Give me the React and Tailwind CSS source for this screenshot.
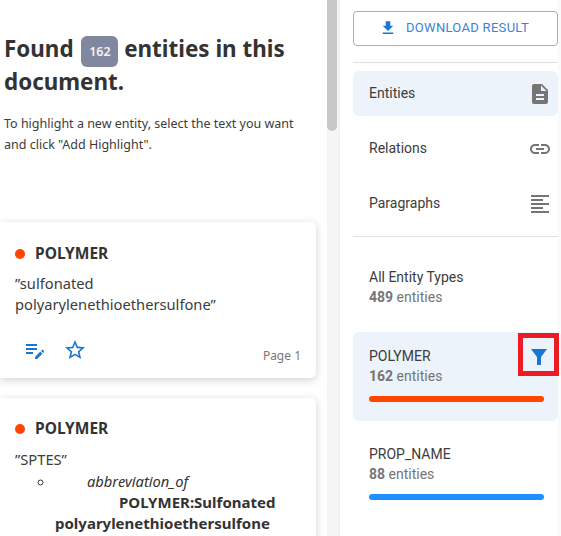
import React from 'react';

const Icon = ({ d, className }) => (
  <svg viewBox="0 0 24 24" fill="currentColor" className={className}>
    <path d={d} />
  </svg>
);

const paths = {
  download: 'M19 9h-4V3H9v6H5l7 7 7-7zM5 18v2h14v-2H5z',
  doc: 'M14 2H6c-1.1 0-1.99.9-1.99 2L4 20c0 1.1.89 2 1.99 2H18c1.1 0 2-.9 2-2V8l-6-6zm2 16H8v-2h8v2zm0-4H8v-2h8v2zm-3-5V3.5L18.5 9H13z',
  link: 'M3.9 12c0-1.71 1.39-3.1 3.1-3.1h4V7H7c-2.76 0-5 2.24-5 5s2.24 5 5 5h4v-1.9H7c-1.71 0-3.1-1.39-3.1-3.1zM8 13h8v-2H8v2zm9-6h-4v1.9h4c1.71 0 3.1 1.39 3.1 3.1s-1.39 3.1-3.1 3.1h-4V17h4c2.76 0 5-2.24 5-5s-2.24-5-5-5z',
  subject: 'M3 21h18v-2H3v2zm0-4h12v-2H3v2zm0-4h18v-2H3v2zm0-4h12V7H3v2zm0-6v2h18V3H3z',
  filter: 'M4 4h16l-6 8v8h-4v-8z',
  star: 'M22 9.24l-7.19-.62L12 2 9.19 8.63 2 9.24l5.46 4.73L5.82 21 12 17.27 18.18 21l-1.63-7.03L22 9.24zM12 15.4l-3.76 2.27 1-4.28-3.32-2.88 4.38-.38L12 6.1l1.71 4.04 4.38.38-3.32 2.88 1 4.28L12 15.4z',
  editNote: 'M3 10h11v2H3v-2zm0-2h11V6H3v2zm0 8h7v-2H3v2zm15.01-3.13l.71-.71c.39-.39 1.02-.39 1.41 0l.71.71c.39.39.39 1.02 0 1.41l-.71.71-2.12-2.12zm-.71.71l-5.3 5.3V21h2.12l5.3-5.3-2.12-2.12z',
};

const TabRow = ({ label, icon, active }) => (
  <div className={`flex h-[45px] items-center justify-between rounded-[6px] pl-4 pr-[6px] text-[14px] text-[#3c3c3c] ${active ? 'bg-[#edf3fb]' : ''}`}>
    <span>{label}</span>
    <Icon d={icon} className="h-6 w-6 text-[#757575]" />
  </div>
);

const TypeRow = ({ name, count, barClass, active }) => (
  <div className={`relative rounded-[6px] pl-4 pr-[14px] pt-[14px] pb-[19px] ${active ? 'bg-[#edf3fb]' : ''}`}>
    <div className="text-[14px] leading-5 text-[#3c3c3c]">{name}</div>
    <div className="text-[14px] leading-5 text-[#757575]">
      <b className="font-bold">{count}</b> entities
    </div>
    <div className={`mt-[10px] h-[6px] rounded-full ${barClass}`} />
    {active ? (
      <div className="absolute top-[1px] right-[-1px] flex h-[43px] w-[41px] items-center justify-center border-[5px] border-[#ed1c24]">
        <Icon d={paths.filter} className="mt-1 h-6 w-6 text-[#1976d2]" />
      </div>
    ) : null}
  </div>
);

const CardHead = () => (
  <div className="flex items-center text-[#333333]">
    <span className="h-[10px] w-[10px] rounded-full bg-[#ff4500]" />
    <span className="ml-[10px] text-[15.5px] font-bold">POLYMER</span>
  </div>
);

export default function App() {
  return (
    <div className="flex h-[536px] w-[561px] overflow-hidden bg-white font-['Noto_Sans',sans-serif]">
      <div className="w-[327px] shrink-0 overflow-hidden">
        <h1 className="mt-[33px] ml-1 text-[22.4px] leading-8 font-bold text-[#333333]">
          Found{' '}
          <span className="relative top-px ml-[2px] inline-flex h-[31px] w-[37px] items-center justify-center rounded-[6px] bg-[#8287a0] align-middle text-[12.5px] font-semibold text-[#f2f2f2]">
            162
          </span>{' '}
          entities in this document.
        </h1>
        <p className="mt-[15px] ml-1 w-[310px] text-[12.5px] leading-[21px] text-[#3c3c3c]">
          To highlight a new entity, select the text you want and click "Add Highlight".
        </p>

        <div className="mt-[67px] h-[156px] w-[316px] rounded-r-[5px] bg-white px-[15px] pt-[20px] shadow-[0_2px_8px_rgba(0,0,0,0.18)]">
          <CardHead />
          <p className="mt-[7px] text-[14.7px] leading-[21px] text-[#3c3c3c]">
            ”sulfonated
            <br />
            polyarylenethioethersulfone”
          </p>
          <div className="mt-[23px] flex items-start">
            <Icon d={paths.editNote} className="ml-2 h-6 w-6 text-[#1976d2]" />
            <Icon d={paths.star} className="ml-4 h-6 w-6 text-[#1976d2]" />
            <span className="mt-[9px] ml-auto text-[12px] text-[#777777]">Page 1</span>
          </div>
        </div>

        <div className="mt-5 h-[200px] w-[316px] rounded-r-[5px] bg-white px-[15px] pt-[19px] shadow-[0_2px_8px_rgba(0,0,0,0.18)]">
          <CardHead />
          <p className="mt-[8px] text-[14.7px] leading-[21px] text-[#3c3c3c]">”SPTES”</p>
          <ul className="mt-px list-[circle] pl-10 text-[14.7px] leading-[21px] text-[#333333]">
            <li>
              <div className="indent-8"><i>abbreviation_of</i></div>
              <div className="indent-16 text-[15px] font-bold">POLYMER:Sulfonated polyarylenethioethersulfone</div>
            </li>
          </ul>
        </div>
      </div>

      <div className="w-[12px] shrink-0 bg-[#f5f5f5]">
        <div className="h-[131px] w-[10px] rounded-b-[5px] bg-[#c8c8c8]" />
      </div>

      <div className="flex-1 border-l border-r-[3px] border-l-[#f0f0f0] border-r-[#fafafa] pt-[11px] pl-[13px] font-['Roboto',sans-serif]">
        <button className="flex h-[35px] w-full items-center justify-center gap-[9px] rounded-[4px] border border-[#87b6e6] pr-[3px] pb-[2px] text-[13px] tracking-[0.3px] text-[#3b82d8]">
          <Icon d={paths.download} className="h-[18px] w-[18px] text-[#1976d2]" />
          DOWNLOAD RESULT
        </button>
        <div className="mt-4 border-t border-[#e0e0e0]" />
        <div className="mt-2">
          <TabRow label="Entities" icon={paths.doc} active />
          <div className="mt-[10px]"><TabRow label="Relations" icon={paths.link} /></div>
          <div className="mt-[10px]"><TabRow label="Paragraphs" icon={paths.subject} /></div>
        </div>
        <div className="mt-[10px] border-t border-[#e0e0e0]" />
        <div className="mt-[14px]">
          <div className="px-4 pt-[16px] pb-[15px]">
            <div className="text-[14px] leading-5 text-[#3c3c3c]">All Entity Types</div>
            <div className="text-[14px] leading-5 text-[#757575]"><b>489</b> entities</div>
          </div>
          <div className="mt-[10px]"><TypeRow name="POLYMER" count="162" barClass="bg-[#ff4500]" active /></div>
          <div className="mt-[9px]"><TypeRow name="PROP_NAME" count="88" barClass="bg-[#1e90ff]" /></div>
        </div>
      </div>
    </div>
  );
}
